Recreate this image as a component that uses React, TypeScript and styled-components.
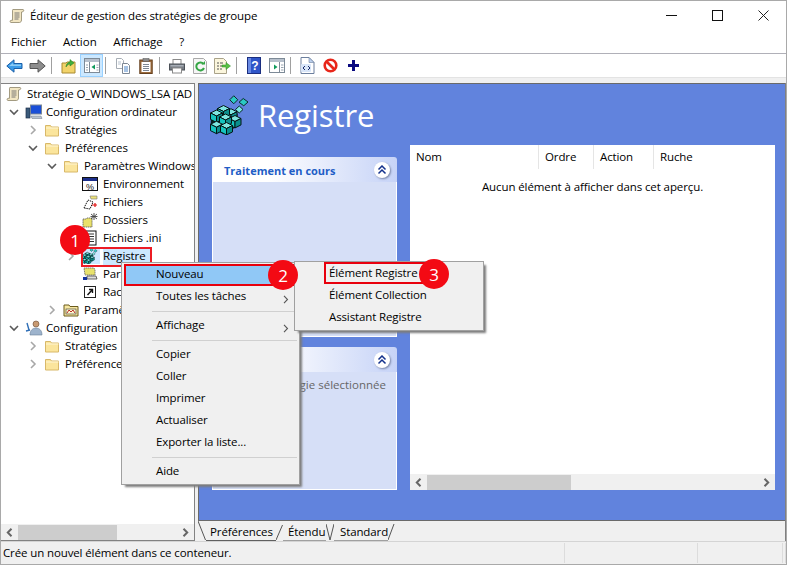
import React from "react";
import styled, { createGlobalStyle } from "styled-components";

const Global = createGlobalStyle`
  html, body { margin: 0; padding: 0; background: #fff; }
  * { box-sizing: border-box; }
  body { font-family: "Open Sans", "Noto Sans", sans-serif; font-size: 11.5px; color: #000; }
`;

const Win = styled.div`
  position: relative; width: 787px; height: 565px; overflow: hidden;
  border: 1px solid #a9a9a9; background: #f0f0f0; display: flex; flex-direction: column;
`;
const TitleBar = styled.div`
  height: 32px; background: #fff; display: flex; align-items: center; padding: 0 0 3px 8px;
`;
const TitleText = styled.span`margin-left: 5px; flex: 1; letter-spacing: -0.12px;`;
const WinBtn = styled.div`width: 46px; height: 30px; display: flex; align-items: center; justify-content: center;`;
const MenuBar = styled.div`
  height: 21px; background: #fff; border-bottom: 1px solid #b0b0b8; display: flex; align-items: center; padding: 0 0 4px 10px; gap: 16.5px;
`;
const Toolbar = styled.div`height: 23px; background: #fff; display: flex; align-items: stretch; padding-left: 2px;`;
const ToolBtn = styled.div<{ $active?: boolean }>`
  width: 23px; display: flex; align-items: center; justify-content: center;
  background: ${p => (p.$active ? "#cce8ff" : "transparent")};
  border: 1px solid ${p => (p.$active ? "#99d1ff" : "transparent")};
`;
const ToolSep = styled.div`width: 1px; margin: 3px 5px 3px 2px; background: #a0a0a0;`;
const Band = styled.div`height: 6px; background: #f0f0f0; border-top: 1px solid #e3e3e3;`;
const Main = styled.div`height: 458px; display: flex; gap: 3px;`;
const TreePane = styled.div`
  width: 194px; background: #fff; border: solid #828282; border-width: 1px 1px 1px 0; display: flex; flex-direction: column; overflow: hidden;
`;
const TreeList = styled.div`flex: 1; padding-top: 1px; overflow: hidden; letter-spacing: -0.12px;`;
const Row = styled.div<{ $depth: number }>`
  height: 18px; display: flex; align-items: center; white-space: nowrap; padding-left: ${p => p.$depth * 19 + 5}px;
`;
const Chevron = styled.div`width: 16px; margin: 0 3px 0 -19px; display: flex; justify-content: center; flex: none;`;
const RowIcon = styled.div`width: 18px; height: 16px; flex: none; display: flex; align-items: center;`;
const RowLabel = styled.span`
  margin-left: 3px; padding: 0 4px 1px 0; line-height: 16px;
`;
const HScroll = styled.div`height: 16px; background: #f0f0f0; display: flex; align-items: center; justify-content: space-between; flex: none;`;
const ScrollArrow = styled.div`width: 17px; height: 16px; display: flex; align-items: center; justify-content: center;`;
const ScrollTrack = styled.div`flex: 1; height: 15px;`;
const ScrollThumb = styled.div<{ $w: number }>`width: ${p => p.$w}px; height: 100%; background: #cdcdcd;`;

const Right = styled.div`flex: 1; display: flex; flex-direction: column; border-right: 1px solid #808080; min-width: 0;`;
const Blue = styled.div`
  height: 438px; background: #6183dd; border: 1px solid #6a6a6a; border-width: 1px 0 1px 1px; padding: 0 10px 30px 13px; display: flex; flex-direction: column;
`;
const BlueHead = styled.div`height: 61px; display: flex; align-items: flex-start; padding-top: 11px; gap: 8px; margin-left: -2px;`;
const BigTitle = styled.div`font-size: 31px; color: #fff; line-height: 40px; letter-spacing: -0.1px;`;
const BlueBody = styled.div`flex: 1; display: flex; gap: 13px; min-height: 0;`;
const Cards = styled.div`width: 185px; padding-top: 12px; display: flex; flex-direction: column; gap: 10px;`;
const Card = styled.div<{ $grow?: boolean }>`
  display: flex; flex-direction: column; ${p => (p.$grow ? "flex: 1;" : "height: 180px;")}
`;
const CardHead = styled.div`
  height: 25px; border-radius: 3px 3px 0 0; background: linear-gradient(90deg, #fff 30%, #c6d3f7);
  display: flex; align-items: center; justify-content: space-between; padding: 0 7px 0 12px; flex: none;
`;
const CardTitle = styled.span`font-weight: 700; font-size: 11px; color: #215dc6; padding-top: 1px;`;
const Collapse = styled.div`
  width: 16px; height: 16px; border-radius: 50%; background: #fff; box-shadow: 1px 1px 2px #7a87a8; display: flex; align-items: center; justify-content: center;
`;
const CardBody = styled.div`
  flex: 1; background: #d6dff7; border: 1px solid #fff; border-top: 0; padding: 5px 0 0 12px; color: #666; white-space: nowrap;
`;
const ListView = styled.div`flex: 1; background: #fff; display: flex; flex-direction: column;`;
const ListHead = styled.div`height: 24px; display: flex; flex: none; letter-spacing: -0.12px;`;
const Col = styled.div<{ $w: number }>`
  width: ${p => p.$w}px; padding: 4px 0 0 6px; border-right: 1px solid #e5e5e5;
  &:last-child { border-right: 0; flex: 1; }
`;
const Empty = styled.div`flex: 1; text-align: center; padding-top: 10px; letter-spacing: -0.1px;`;

const TabStrip = styled.div`height: 20px; display: flex; align-items: stretch; letter-spacing: -0.12px; background: #f0f0f0;`;
const TabLabel = styled.div<{ $w: number; $pad: number; $active?: boolean }>`
  width: ${p => p.$w}px; padding-left: ${p => p.$pad}px; line-height: 21px; white-space: nowrap;
  border-bottom: 1px solid ${p => (p.$active ? "#606060" : "#a0a0a0")};
`;
const StatusBar = styled.div`
  height: 23px; border-top: 1px solid #d4d4d4; display: flex; background: #f0f0f0; letter-spacing: -0.12px;
`;
const StatusCell = styled.div<{ $w?: number }>`
  ${p => (p.$w ? `width:${p.$w}px;` : "flex:1;")} padding: 2px 0 0 2px; margin: 1px 0; border-right: 1px solid #dcdcdc; white-space: nowrap;
`;

const Menu = styled.div<{ $x: number; $y: number; $w: number }>`
  position: absolute; left: ${p => p.$x}px; top: ${p => p.$y}px; width: ${p => p.$w}px;
  background: #f0f0f0; border: 1px solid #a0a0a0; box-shadow: 3px 3px 2px -1px #7d7d7d; padding: 1px 2px; letter-spacing: -0.12px;
`;
const MenuItem = styled.div<{ $hl?: boolean; $boxed?: boolean }>`
  position: relative; height: 22px; display: flex; align-items: center; padding-left: 32px; padding-bottom: 3px;
  background: ${p => (p.$hl ? "#90c8f6" : "transparent")};
  ${p => (p.$boxed ? "outline: 2px solid #e8000d; outline-offset: -2px;" : "")}
`;
const Arrow = styled.div`position: absolute; right: 8px; top: 6px;`;
const MenuSep = styled.div`height: 1px; margin: 3px 0 3px 28px; background: #d0d0d0;`;
const Boxed = styled.div`
  position: absolute; left: 323px; top: 261px; width: 101px; height: 22px; border: 2px solid #e8000d;
`;
const SelBox = styled.div`
  position: absolute; left: 80px; top: 246px; width: 71px; height: 20px; border: 2px solid #ec1c24; pointer-events: none;
`;
const Badge = styled.div<{ $x: number; $y: number }>`
  position: absolute; left: ${p => p.$x - 15}px; top: ${p => p.$y - 15}px; width: 30px; height: 30px; border-radius: 50%;
  background: #f30a14; color: #fff; font-size: 17px; display: flex; align-items: center; justify-content: center; line-height: 1;
`;
const SelRow = styled(Row)`
  & > span { background: #cce8ff; padding-right: 6px; }
  & > div:nth-child(2) { background: #cce8ff; }
`;

/* -------- icons ------- */
const Scroll = ({ s = 16 }: { s?: number }) => (
  <svg width={s} height={s} viewBox="0 0 16 16">
    <path d="M4 1.5h10c1 0 1 2-.2 2.2L12.5 4v8c0 1.5-1 2.5-2 2.5H2c-1.2 0-1.2-2 0-2.2h1.5V3C3.5 2 3.5 1.5 4 1.5z" fill="#f2e6c3" stroke="#8d8468" strokeWidth=".8" />
    <path d="M5.5 5h5M5.5 7h5M5.5 9h5M5.5 11h4" stroke="#6b6b6b" strokeWidth=".9" />
  </svg>
);
const Folder = () => (
  <svg width="16" height="16" viewBox="0 0 16 16">
    <path d="M1.5 3.5h5l1 1.5h7v9h-13z" fill="#fbe59c" stroke="#d8b869" />
    <path d="M2 6h12.5" stroke="#fff6d6" />
  </svg>
);
const ChevD = () => (
  <svg width="10" height="7" viewBox="0 0 10 7"><path d="M1 1l4 4 4-4" fill="none" stroke="#5a5a5a" strokeWidth="1.6" /></svg>
);
const ChevR = () => (
  <svg width="7" height="10" viewBox="0 0 7 10"><path d="M1 1l4 4-4 4" fill="none" stroke="#a8a8a8" strokeWidth="1.6" /></svg>
);
const Computer = () => (
  <svg width="18" height="16" viewBox="0 0 18 16">
    <rect x="1" y="4" width="4" height="10" fill="#3a5a7a" stroke="#1e2f4a" strokeWidth=".7" />
    <rect x="5.500" y="1" width="11" height="9" fill="#1a4fd8" stroke="#7a8796" />
    <path d="M6 12h10l1 2.500H7z" fill="#b9c3cf" stroke="#6a7584" strokeWidth=".5" />
  </svg>
);
const Users = () => (
  <svg width="18" height="16" viewBox="0 0 18 16">
    <circle cx="11" cy="4" r="3" fill="#c89a72" stroke="#6a4a33" strokeWidth=".6" />
    <path d="M5 15c0-5 3-7 6-7s6 2 6 7z" fill="#9db3cc" stroke="#6a7f99" strokeWidth=".6" />
    <path d="M2 3l2 7M1 11l4-1" stroke="#2f6fb7" strokeWidth="1.4" fill="none" />
  </svg>
);
const EnvIcon = () => (
  <svg width="16" height="14" viewBox="0 0 16 14">
    <rect x=".5" y=".5" width="15" height="13" fill="#fff" stroke="#111" />
    <rect x="1" y="1" width="14" height="3" fill="#1c2e8c" />
    <text x="8" y="12.5" textAnchor="middle" fontSize="9" fontFamily="Liberation Sans" fill="#111">%</text>
  </svg>
);
const FilesIcon = () => (
  <svg width="16" height="16" viewBox="0 0 16 16">
    <path d="M2 14l4-8 5 2-3 7z" fill="#fff" stroke="#111" strokeDasharray="1.4 .8" />
    <path d="M8 2h7v3H9z" fill="#ece27a" stroke="#777" strokeWidth=".6" />
    <path d="M10 11h5M13 9v4" stroke="#e01010" strokeWidth="1.2" />
  </svg>
);
const FoldersIcon = () => (
  <svg width="16" height="16" viewBox="0 0 16 16">
    <path d="M1 7h3l1-1h5v9H1z" fill="#e9e16a" stroke="#555" strokeWidth=".8" strokeDasharray="1.5 .6" />
    <path d="M12 1v7M9 2l6 5M15 2L9 7M8.5 4.5h7" stroke="#444" strokeWidth=".9" />
  </svg>
);
const IniIcon = () => (
  <svg width="16" height="16" viewBox="0 0 16 16">
    <rect x="4" y="1" width="10" height="14" fill="#fff" stroke="#111" />
    <path d="M6 4h6M6 6.5h6M6 9h6M6 11.5h6" stroke="#333" strokeWidth="1" />
    <circle cx="4" cy="12" r="2.5" fill="#e8c82a" stroke="#8a7210" strokeWidth=".6" />
  </svg>
);
const Cube = ({ x, y, z = 1 }: { x: number; y: number; z?: number }) => (
  <g transform={`translate(${x} ${y}) scale(${z})`}>
    <path d="M0 1.500L3 0l3 1.500L3 3z" fill="#7fe6e0" stroke="#041414" strokeWidth=".5" />
    <path d="M0 1.500L3 3v3.200L0 4.700z" fill="#15c4be" stroke="#041414" strokeWidth=".5" />
    <path d="M6 1.500L3 3v3.200l3-1.500z" fill="#0a8f8e" stroke="#041414" strokeWidth=".5" />
  </g>
);
const RegIcon = ({ s = 16 }: { s?: number }) => (
  <svg width={s} height={s} viewBox="0 0 16 16">
    <path d="M.3 7.500L5 4.500l6 3v5l-5.500 3.200L.3 13z" fill="#052020" />
    <Cube x={6} y={5.500} z={0.8} />
    <Cube x={3} y={4.200} z={0.8} />
    <Cube x={0.2} y={6} z={0.8} />
    <Cube x={7.600} y={8.200} z={0.8} />
    <Cube x={3.800} y={7.600} z={0.8} />
    <Cube x={0.2} y={10.500} z={0.8} />
    <Cube x={4.200} y={11} z={0.8} />
    <path d="M9.500.3l1.600 1.600-1.600 1.600-1.600-1.600z" fill="#2bc9c4" stroke="#0a2b2b" strokeWidth=".4" />
    <path d="M13.300 1.400l1.900 1.400-1.700 1.500-1.900-1.400z" fill="#2bc9c4" stroke="#0a2b2b" strokeWidth=".4" />
    <path d="M11.700 4.400l1.500 1.400-1.500 1.400-1.500-1.400z" fill="#7be7e2" stroke="#0a2b2b" strokeWidth=".4" />
  </svg>
);
const NetIcon = () => (
  <svg width="16" height="16" viewBox="0 0 16 16">
    <path d="M2 2h10l1 2v5H3z" fill="#e8e26c" stroke="#666" strokeWidth=".8" strokeDasharray="1.5 .5" />
    <path d="M5 10h9l1 3H5z" fill="#ddd" stroke="#444" strokeWidth=".8" />
    <rect x="1" y="11" width="4" height="3" fill="#12329c" />
  </svg>
);
const ShortIcon = () => (
  <svg width="16" height="16" viewBox="0 0 16 16">
    <rect x="2.500" y="2.500" width="11" height="11" fill="#fff" stroke="#222" />
    <path d="M5.500 11l4.500-5M7 5.500h3.500V9" stroke="#111" strokeWidth="1.4" fill="none" />
  </svg>
);
const CtlFolder = () => (
  <svg width="16" height="16" viewBox="0 0 16 16">
    <path d="M1 3h5l1 1.500h8V14H1z" fill="#f7e7a1" stroke="#6a5a1c" />
    <rect x="3" y="7" width="10" height="5" fill="#fff8cf" stroke="#333" strokeWidth=".6" />
    <path d="M4 11l2-3 2 2 2-2 2 3" stroke="#b01515" strokeWidth=".9" fill="none" />
  </svg>
);
const ArrowL = ({ c = "#666" }: { c?: string }) => (
  <svg width="7" height="9" viewBox="0 0 7 9"><path d="M5.500 .8L1.800 4.500l3.700 3.700" fill="none" stroke={c} strokeWidth="2" /></svg>
);
const ArrowR = ({ c = "#666" }: { c?: string }) => (
  <svg width="7" height="9" viewBox="0 0 7 9"><path d="M1.500 .8l3.700 3.700-3.700 3.700" fill="none" stroke={c} strokeWidth="2" /></svg>
);
const MenuArrow = () => (
  <svg width="6" height="9" viewBox="0 0 6 9"><path d="M1 .8l3.500 3.700L1 8.200" fill="none" stroke="#555" strokeWidth="1.1" /></svg>
);
const DoubleUp = () => (
  <svg width="10" height="10" viewBox="0 0 10 10"><path d="M1.500 4.500L5 1l3.500 3.500M1.500 8.500L5 5l3.500 3.500" fill="none" stroke="#14328c" strokeWidth="1.5" /></svg>
);
const Back = () => (
  <svg width="17" height="14" viewBox="0 0 17 14"><path d="M8 .8L.8 7 8 13.200V9.500h8v-5H8z" fill="#3a9be8" stroke="#1a5fa8" /><path d="M7 4L3 7h12V5.500H7z" fill="#8ccbf5" /></svg>
);
const Forward = () => (
  <svg width="17" height="14" viewBox="0 0 17 14"><path d="M9 .8L16.200 7 9 13.200V9.500H1v-5h8z" fill="#8d8d8d" stroke="#555" /></svg>
);
const UpFolder = () => (
  <svg width="16" height="16" viewBox="0 0 16 16">
    <path d="M1 5h4l1-1h8v11H1z" fill="#f2d36a" stroke="#a98a33" />
    <path d="M5 9c0-3 2-5 4-5V1.500L13 5 9 8V6C7 6 6 7.500 5 9z" fill="#3faf3c" stroke="#227a22" strokeWidth=".5" />
  </svg>
);
const PaneTree = () => (
  <svg width="16" height="15" viewBox="0 0 16 15">
    <rect x=".5" y=".5" width="15" height="14" fill="#fff" stroke="#7d8a97" />
    <rect x="1" y="1" width="14" height="3" fill="#b7c0cc" />
    <path d="M5.500 4v10" stroke="#7d8a97" />
    <path d="M2 7h2M2 9.500h2M2 12h2" stroke="#98a4b0" />
    <path d="M11 6.500v5L7.500 9z" fill="#0f9a5b" />
    <path d="M12.500 7h2M12.500 9.500h2M12.500 12h2" stroke="#98a4b0" />
  </svg>
);
const PaneAction = () => (
  <svg width="16" height="15" viewBox="0 0 16 15">
    <rect x=".5" y=".5" width="15" height="14" fill="#fff" stroke="#7d8a97" />
    <rect x="1" y="1" width="14" height="3" fill="#b7c0cc" />
    <path d="M10.500 4v10" stroke="#7d8a97" />
    <path d="M5 6.500v5L8.500 9z" fill="#0f9a5b" />
    <path d="M12 7h2.500M12 9.500h2.500M12 12h2.500" stroke="#98a4b0" />
  </svg>
);
const Copy = () => (
  <svg width="16" height="16" viewBox="0 0 16 16">
    <path d="M1.500 .5h5l2 2v8h-7z" fill="#fff" stroke="#a6adb5" />
    <path d="M7.500 5.500h5l2 2v8h-7z" fill="#fff" stroke="#7d8794" />
    <path d="M9 9h4M9 11h4M9 13h4" stroke="#4f87c9" />
    <path d="M3 4h3M3 6h3" stroke="#b9c4d0" />
  </svg>
);
const Paste = () => (
  <svg width="14" height="16" viewBox="0 0 14 16">
    <rect x=".8" y="2" width="12.4" height="13.5" fill="#9c6b3c" stroke="#65401e" />
    <rect x="2.500" y="4" width="9" height="10" fill="#fff" />
    <rect x="4" y=".5" width="6" height="3" fill="#8b8b8b" stroke="#555" strokeWidth=".5" />
    <path d="M4 6.500h6M4 8.500h6M4 10.500h6M4 12.500h6" stroke="#7d8794" />
  </svg>
);
const Printer = () => (
  <svg width="16" height="16" viewBox="0 0 16 16">
    <rect x="4" y="1.500" width="8" height="5" fill="#fff" stroke="#8a8a8a" />
    <rect x=".5" y="6" width="15" height="6" fill="#767c84" stroke="#4b5057" />
    <rect x="3.500" y="10" width="9" height="5" fill="#fff" stroke="#8a8a8a" />
    <rect x="1.500" y="7" width="13" height="1.5" fill="#a8aeb6" />
  </svg>
);
const Refresh = () => (
  <svg width="14" height="16" viewBox="0 0 14 16">
    <path d="M.5 .5h10l3 3v12H.5z" fill="#f6f6f6" stroke="#a9a9a9" />
    <path d="M10.500 6A4 4 0 1 0 11 10" fill="none" stroke="#35a645" strokeWidth="2" />
    <path d="M8.500 6.500H12V3z" fill="#35a645" />
  </svg>
);
const Export = () => (
  <svg width="17" height="16" viewBox="0 0 17 16">
    <path d="M.5 .5h9l3 3v12H.5z" fill="#fbf6dd" stroke="#a9a289" />
    <path d="M3 5h2M3 8h2M3 11h2M6 5h3M6 8h2M6 11h2" stroke="#555" />
    <path d="M8 7h4V4.500L16.500 8 12 11.500V9H8z" fill="#58c143" stroke="#2d8a24" strokeWidth=".5" />
  </svg>
);
const Help = () => (
  <svg width="14" height="17" viewBox="0 0 14 17">
    <rect x=".5" y=".5" width="13" height="16" fill="#2f55c8" stroke="#1a2e80" />
    <rect x="1" y="1" width="3" height="15" fill="#6a8ae3" />
    <text x="8" y="13" textAnchor="middle" fontSize="12" fontWeight="700" fontFamily="Liberation Sans" fill="#fff">?</text>
  </svg>
);
const ScriptDoc = () => (
  <svg width="15" height="17" viewBox="0 0 15 17">
    <path d="M1 .5h8l5 5v11H1z" fill="#fff" stroke="#6c7f9e" />
    <path d="M9 .5v5h5z" fill="#bcd0ee" stroke="#6c7f9e" strokeWidth=".6" />
    <rect x="1" y="7" width="10" height="8" rx="1" fill="#d8e5f8" />
    <path d="M5 9l-2 2 2 2M8 9l2 2-2 2" stroke="#16296b" fill="none" />
  </svg>
);
const Stop = () => (
  <svg width="15" height="15" viewBox="0 0 15 15">
    <circle cx="7.500" cy="7.500" r="5.800" fill="#fff" stroke="#e8261a" strokeWidth="2.6" />
    <path d="M3.500 3.500l8 8" stroke="#e8261a" strokeWidth="2.6" />
  </svg>
);
const Plus = () => (
  <svg width="11" height="11" viewBox="0 0 11 11"><path d="M4 0h3v4h4v3H7v4H4V7H0V4h4z" fill="#0a0a80" /></svg>
);
const Edge = ({ d, w = 10 }: { d: string; w?: number }) => (
  <svg width={w} height="20" viewBox={`0 0 ${w} 20`} style={{ flex: "none" }}><path d={d} fill="none" stroke="#555" /></svg>
);

const tree: Array<[number, string, "o" | "c" | "", React.ReactNode, boolean?]> = [
  [1, "Stratégie O_WINDOWS_LSA [AD", "", <Scroll />],
  [2, "Configuration ordinateur", "o", <Computer />],
  [3, "Stratégies", "c", <Folder />],
  [3, "Préférences", "o", <Folder />],
  [4, "Paramètres Windows", "o", <Folder />],
  [5, "Environnement", "", <EnvIcon />],
  [5, "Fichiers", "", <FilesIcon />],
  [5, "Dossiers", "", <FoldersIcon />],
  [5, "Fichiers .ini", "", <IniIcon />],
  [5, "Registre", "c", <RegIcon />, true],
  [5, "Paramètres réseau", "", <NetIcon />],
  [5, "Raccourcis", "", <ShortIcon />],
  [4, "Paramètres du Panneau", "c", <CtlFolder />],
  [2, "Configuration utilisateur", "o", <Users />],
  [3, "Stratégies", "c", <Folder />],
  [3, "Préférences", "c", <Folder />],
];

export default function App() {
  return (
    <Win>
      <Global />
      <TitleBar>
        <Scroll />
        <TitleText>Éditeur de gestion des stratégies de groupe</TitleText>
        <WinBtn><svg width="11" height="11" viewBox="0 0 11 11"><path d="M0 5.500h11" stroke="#111" /></svg></WinBtn>
        <WinBtn><svg width="11" height="11" viewBox="0 0 11 11"><rect x=".5" y=".5" width="10" height="10" fill="none" stroke="#111" /></svg></WinBtn>
        <WinBtn><svg width="11" height="11" viewBox="0 0 11 11"><path d="M.5 .5l10 10M10.500 .5l-10 10" stroke="#222" /></svg></WinBtn>
      </TitleBar>
      <MenuBar>
        <span>Fichier</span><span>Action</span><span>Affichage</span><span>?</span>
      </MenuBar>
      <Toolbar>
        <ToolBtn><Back /></ToolBtn><ToolBtn><Forward /></ToolBtn><ToolSep />
        <ToolBtn><UpFolder /></ToolBtn><ToolBtn $active><PaneTree /></ToolBtn><ToolSep />
        <ToolBtn><Copy /></ToolBtn><ToolBtn><Paste /></ToolBtn><ToolSep />
        <ToolBtn><Printer /></ToolBtn><ToolBtn><Refresh /></ToolBtn><ToolBtn><Export /></ToolBtn><ToolSep />
        <ToolBtn><Help /></ToolBtn><ToolBtn><PaneAction /></ToolBtn><ToolSep />
        <ToolBtn><ScriptDoc /></ToolBtn><ToolBtn><Stop /></ToolBtn><ToolBtn><Plus /></ToolBtn>
      </Toolbar>
      <Band />
      <Main>
        <TreePane>
          <TreeList>
            {tree.map(([d, label, ch, icon, sel], i) => {
              const R = sel ? SelRow : Row;
              return (
                <R key={i} $depth={d - 1}>
                  {ch && <Chevron>{ch === "o" ? <ChevD /> : <ChevR />}</Chevron>}
                  <RowIcon>{icon}</RowIcon>
                  <RowLabel>{label}</RowLabel>
                </R>
              );
            })}
          </TreeList>
          <HScroll>
            <ScrollArrow><ArrowL /></ScrollArrow>
            <ScrollTrack><ScrollThumb $w={99} /></ScrollTrack>
            <ScrollArrow><ArrowR /></ScrollArrow>
          </HScroll>
        </TreePane>
        <Right>
          <Blue>
            <BlueHead>
              <RegIcon s={40} />
              <BigTitle>Registre</BigTitle>
            </BlueHead>
            <BlueBody>
              <Cards>
                <Card>
                  <CardHead><CardTitle>Traitement en cours</CardTitle><Collapse><DoubleUp /></Collapse></CardHead>
                  <CardBody />
                </Card>
                <Card $grow>
                  <CardHead><CardTitle>Description</CardTitle><Collapse><DoubleUp /></Collapse></CardHead>
                  <CardBody>Aucune stratégie sélectionnée</CardBody>
                </Card>
              </Cards>
              <ListView>
                <ListHead>
                  <Col $w={129}>Nom</Col><Col $w={55}>Ordre</Col><Col $w={60}>Action</Col><Col $w={100}>Ruche</Col>
                </ListHead>
                <Empty>Aucun élément à afficher dans cet aperçu.</Empty>
                <HScroll>
                  <ScrollArrow><ArrowL /></ScrollArrow>
                  <ScrollTrack><ScrollThumb $w={144} /></ScrollTrack>
                  <ScrollArrow><ArrowR /></ScrollArrow>
                </HScroll>
              </ListView>
            </BlueBody>
          </Blue>
          <TabStrip>
            <Edge w={8} d="M0 0l7.500 19" />
            <TabLabel $w={70} $pad={4} $active>Préférences</TabLabel>
            <Edge w={7} d="M0 19L6.500 4" />
            <TabLabel $w={43} $pad={5}>Étendu</TabLabel>
            <Edge w={8} d="M0 3l4 16M4 19L8 3" />
            <TabLabel $w={54} $pad={6}>Standard</TabLabel>
            <Edge w={7} d="M0 19L6 3" />
          </TabStrip>
        </Right>
      </Main>
      <StatusBar>
        <StatusCell $w={564}>Crée un nouvel élément dans ce conteneur.</StatusCell>
        <StatusCell $w={133} />
        <StatusCell $w={85} />
        <StatusCell />
      </StatusBar>

      <SelBox />
      <Badge $x={74} $y={239}>1</Badge>

      <Menu $x={120} $y={261} $w={179}>
        <MenuItem $hl $boxed>Nouveau</MenuItem>
        <MenuItem>Toutes les tâches<Arrow><MenuArrow /></Arrow></MenuItem>
        <MenuSep />
        <MenuItem>Affichage<Arrow><MenuArrow /></Arrow></MenuItem>
        <MenuSep />
        <MenuItem>Copier</MenuItem>
        <MenuItem>Coller</MenuItem>
        <MenuItem>Imprimer</MenuItem>
        <MenuItem>Actualiser</MenuItem>
        <MenuItem>Exporter la liste...</MenuItem>
        <MenuSep />
        <MenuItem>Aide</MenuItem>
      </Menu>
      <Menu $x={293} $y={260} $w={190}>
        <MenuItem>Élément Registre</MenuItem>
        <MenuItem>Élément Collection</MenuItem>
        <MenuItem>Assistant Registre</MenuItem>
      </Menu>
      <Boxed />
      <Badge $x={282} $y={274}>2</Badge>
      <Badge $x={433} $y={273}>3</Badge>
    </Win>
  );
}
